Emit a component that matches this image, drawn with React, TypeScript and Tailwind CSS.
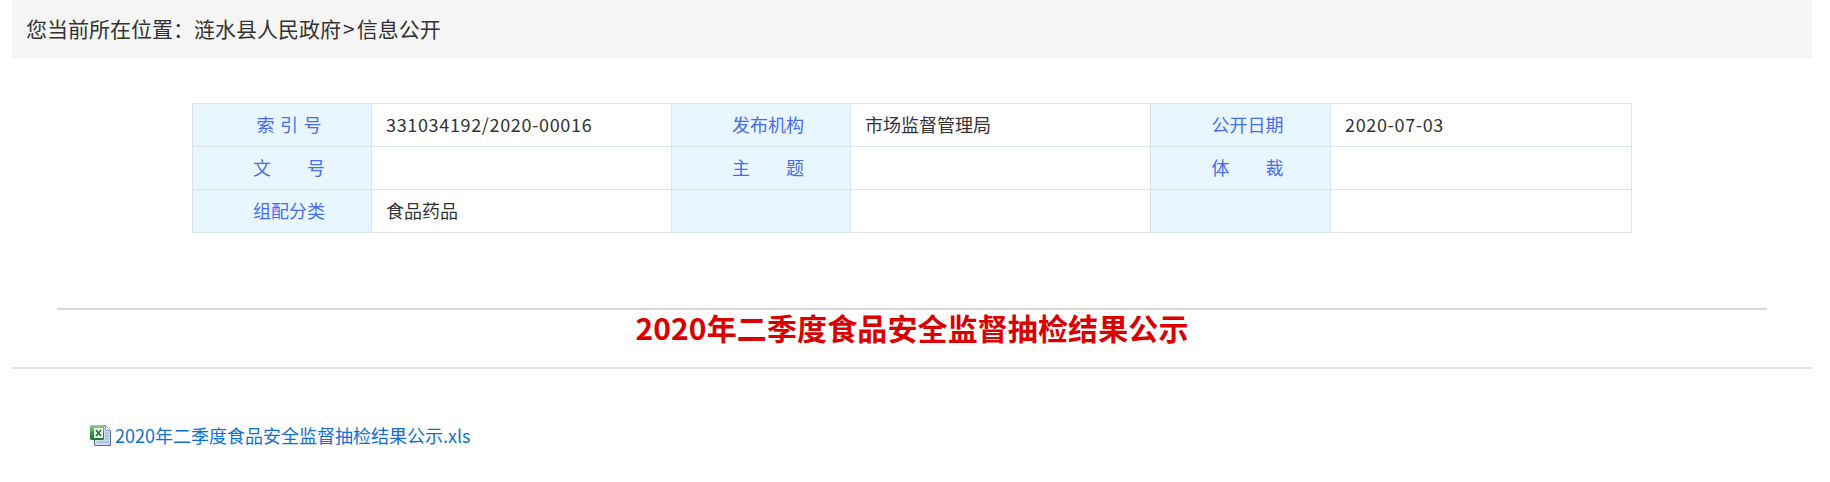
import React from 'react';

const FONT = "font-['Microsoft_YaHei','Noto_Sans_CJK_SC','Noto_Sans',sans-serif]";

const rows: string[][] = [
  ['索 引 号', '331034192/2020-00016', '发布机构', '市场监督管理局', '公开日期', '2020-07-03'],
  ['文　　号', '', '主　　题', '', '体　　裁', ''],
  ['组配分类', '食品药品', '', '', '', ''],
];

const ExcelIcon: React.FC = () => (
  <svg className="h-[22px] w-[22px] flex-shrink-0" viewBox="0 0 22 22">
    <defs>
      <linearGradient id="xlsGreen" x1="0" y1="0" x2="0" y2="1">
        <stop offset="0" stopColor="#9ccf8f" />
        <stop offset="0.5" stopColor="#3d9a4a" />
        <stop offset="1" stopColor="#1f7a32" />
      </linearGradient>
    </defs>
    <path d="M4.5 1.5h11l5 5v15h-16z" fill="#cfdcee" stroke="#54719b" />
    <path d="M15.5 1.5v5h5" fill="#f4f8fc" stroke="#8aa3c4" />
    <path d="M15 9h4M15 12h4M15 15h4M7 18h12" stroke="#8fa8c8" />
    <rect x="0" y="1" width="14" height="15" rx="1.5" fill="url(#xlsGreen)" />
    <rect x="4" y="4" width="9" height="10" fill="#f0f6ec" />
    <path d="M6 6l5 6M11 6l-5 6" stroke="#1f7a32" strokeWidth={1.7} />
  </svg>
);

export default function App() {
  return (
    <div className={`${FONT} ml-3 h-[482px] w-[1800px] overflow-hidden bg-white`}>
      {/* Breadcrumb */}
      <div className="flex h-[58px] items-center bg-[#f5f5f5] pl-[14px] text-[21px] text-[#333]">
        您当前所在位置：涟水县人民政府<span className="px-[2px]">&gt;</span>信息公开
      </div>

      {/* Metadata table */}
      <table className="mt-[45px] ml-[180px] w-[1439px] table-fixed border-collapse border border-[#dddddd] text-[18px]">
        <colgroup>
          <col className="w-[179px]" />
          <col className="w-[300px]" />
          <col className="w-[179px]" />
          <col className="w-[300px]" />
          <col className="w-[180px]" />
          <col className="w-[301px]" />
        </colgroup>
        <tbody>
          {rows.map((row, i) => (
            <tr key={i} className="h-[43px] border-b border-[#dddddd]">
              {row.map((cell, j) =>
                j % 2 === 0 ? (
                  <td key={j} className="border border-[#dde3ea] bg-[#e8f7ff] p-0 pb-[2px] pl-[14px] text-center [word-spacing:1.5px] text-[#4a6cf5]">
                    {cell}
                  </td>
                ) : (
                  <td key={j} className={`border border-[#dde3ea] p-0 pb-[2px] pl-[14px] text-[#333] ${/\d/.test(cell) ? 'tracking-[0.66px]' : ''}`}>
                    {cell}
                  </td>
                ),
              )}
            </tr>
          ))}
        </tbody>
      </table>

      {/* Title */}
      <div className="mt-[75px]">
        <hr className="mx-auto h-[2px] w-[1710px] border-0 bg-[#d9d9d9]" />
        <h1 className="flex h-[57px] items-center justify-center pb-[23px] text-[30px] leading-none font-bold tracking-[0.12px] text-[#d90000]">
          2020年二季度食品安全监督抽检结果公示
        </h1>
        <hr className="h-[2px] border-0 bg-[#e3e3e3]" />
      </div>

      {/* Attachment */}
      <div className="mt-[54px] flex items-center pl-[78px]">
        <ExcelIcon />
        <a href="#" className="ml-[3px] text-[18px] leading-[24px] text-[#0f6fd6]">
          2020年二季度食品安全监督抽检结果公示.xls
        </a>
      </div>
    </div>
  );
}
